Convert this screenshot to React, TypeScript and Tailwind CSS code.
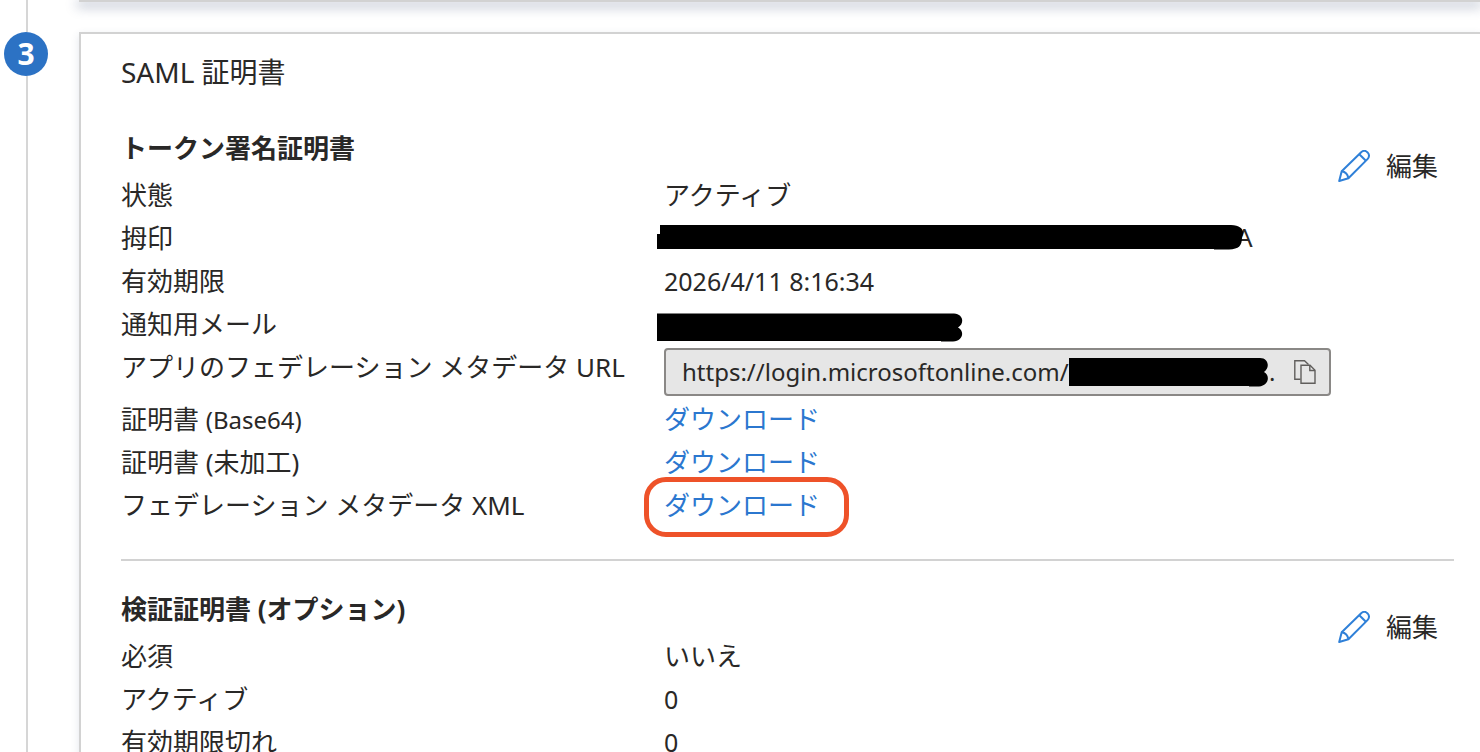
import type { ReactNode } from "react"

function PencilIcon() {
  return (
    <svg className="h-8 w-8 shrink-0" viewBox="0 0 32 32" fill="none" stroke="#2f80d8" strokeWidth="2" strokeLinejoin="round">
      <path d="M1.200 31 3.700 21.300 22.900 2.500C24.900.5 27.600.5 29.600 2.400 31.500 4.300 31.500 7.100 29.500 9.100L10.400 28.300Z" />
      <path d="M21.300 4.200 27.900 10.700" />
      <path d="M3.700 21.300C7 21.800 9.800 24.600 10.400 28.300" />
    </svg>
  )
}

function CopyIcon() {
  return (
    <svg className="h-6 w-[22px]" viewBox="0 0 22 24" fill="none" stroke="#605e5c" strokeWidth="1.400">
      <path d="M6.500 19.300H.8V.8H10.500L14.500 4.600" />
      <path d="M7 5.300H16L21 10.300V23.200H7Z" />
      <path d="M15.800 5.300V10.500H21" />
    </svg>
  )
}

function EditButton() {
  return (
    <button type="button" className="mt-[22px] mr-4 flex h-9 cursor-pointer items-center gap-4">
      <PencilIcon />
      編集
    </button>
  )
}

function Row({ label, children }: { label: ReactNode; children: ReactNode }) {
  return (
    <div className="flex leading-[43px]">
      <dt className="w-[543px] shrink-0">{label}</dt>
      <dd className="flex">{children}</dd>
    </div>
  )
}

function DownloadLink() {
  return (
    <a href="#download" className="text-[#2b77cf]">
      ダウンロード
    </a>
  )
}

function MetadataUrl() {
  return (
    <div className="my-0.5 flex h-12 w-[667px] items-center rounded border-2 border-[#8a8886] bg-[#e6e6e6] pl-4 text-2xl leading-8">
      <input
        id="metadata-url"
        type="text"
        readOnly
        value="https://login.microsoftonline.com/"
        className="w-[387px] bg-transparent outline-none"
      />
      <svg className="h-[29px] w-[200px]" viewBox="0 0 200 29" aria-hidden="true">
        <path d="M0 0H191C200 0 201 10 195 14 202 18 199 28 190 28.500H180V28H0Z" />
      </svg>
      <span>.</span>
      <button type="button" aria-label="コピー" className="mr-[13px] ml-auto cursor-pointer">
        <CopyIcon />
      </button>
    </div>
  )
}

export default function App() {
  return (
    <div
      lang="ja"
      className="flex h-screen overflow-hidden bg-white font-['Noto_Sans','Noto_Sans_CJK_JP',sans-serif] text-[26px] text-[#292827]"
    >
      <div className="ml-1 flex w-[75px] shrink-0 flex-col">
        <div className="ml-[22px] h-8 w-0.5 shrink-0 bg-[#d6d6d6]" />
        <div className="flex h-11 w-11 shrink-0 items-center justify-center rounded-full bg-[#2c72c4] text-[30px] leading-[44px] font-bold text-white">
          3
        </div>
        <div className="ml-[22px] w-0.5 flex-1 bg-[#d6d6d6]" />
      </div>

      <main className="flex min-w-0 flex-1 flex-col gap-[30px]">
        <div className="h-0.5 shrink-0 bg-[#d2d2d2] shadow-[0_3px_12px_2px_rgba(50,70,110,0.36)]" />

        <section className="flex-1 border-t-2 border-l-2 border-[#d2d2d2] pr-[26px] pl-10 shadow-[0_3px_8px_rgba(60,80,120,0.15)]">
          <h2 className="mt-4 text-[28px] leading-[44px]">SAML 証明書</h2>

          <div className="mt-8 flex justify-between">
            <div>
              <h3 className="pb-1 leading-[44px] font-bold">トークン署名証明書</h3>
              <dl>
                <Row label="状態">アクティブ</Row>
                <Row label="拇印">
                  <div className="-ml-[7px] flex h-[43px] items-center pb-0.5">
                    <svg className="relative z-10 h-[25px] w-[587px]" viewBox="0 0 587 25" aria-hidden="true">
                      <path d="M3 0H574C585 .5 588 6 585 12 585 21 582 24 572 24.500H557V24H0V9H3Z" />
                    </svg>
                    <span className="-ml-2">A</span>
                  </div>
                </Row>
                <Row label="有効期限">
                  <span className="text-[25px]">2026/4/11 8:16:34</span>
                </Row>
                <Row label="通知用メール">
                  <div className="-ml-[7px] flex h-[43px] items-center pt-1.5">
                    <svg className="h-[29px] w-[306px]" viewBox="0 0 306 29" aria-hidden="true">
                      <path d="M0 .5H297C306 1 308 10 301 14.500 308 18 306 28 296 28.500H284V28H0Z" />
                    </svg>
                  </div>
                </Row>
                <Row label={<label htmlFor="metadata-url">アプリのフェデレーション メタデータ URL</label>}>
                  <MetadataUrl />
                </Row>
                <Row
                  label={
                    <>
                      証明書 <span className="text-2xl leading-[43px]">(Base64)</span>
                    </>
                  }
                >
                  <DownloadLink />
                </Row>
                <Row label="証明書 (未加工)">
                  <DownloadLink />
                </Row>
                <Row label="フェデレーション メタデータ XML">
                  <div className="relative">
                    <DownloadLink />
                    <div className="pointer-events-none absolute -top-[7px] -left-5 h-[60px] w-[205px] rounded-[22px] border-[5px] border-[#ee5229]" />
                  </div>
                </Row>
              </dl>
            </div>
            <EditButton />
          </div>

          <hr className="mt-8 border-t-2 border-[#d2d2d2]" />

          <div className="mt-[26px] flex justify-between">
            <div>
              <h3 className="pb-1 leading-[44px] font-bold">検証証明書 (オプション)</h3>
              <dl>
                <Row label="必須">いいえ</Row>
                <Row label="アクティブ">
                  <span className="text-[25px]">0</span>
                </Row>
                <Row label="有効期限切れ">
                  <span className="text-[25px]">0</span>
                </Row>
              </dl>
            </div>
            <EditButton />
          </div>
        </section>
      </main>
    </div>
  )
}
